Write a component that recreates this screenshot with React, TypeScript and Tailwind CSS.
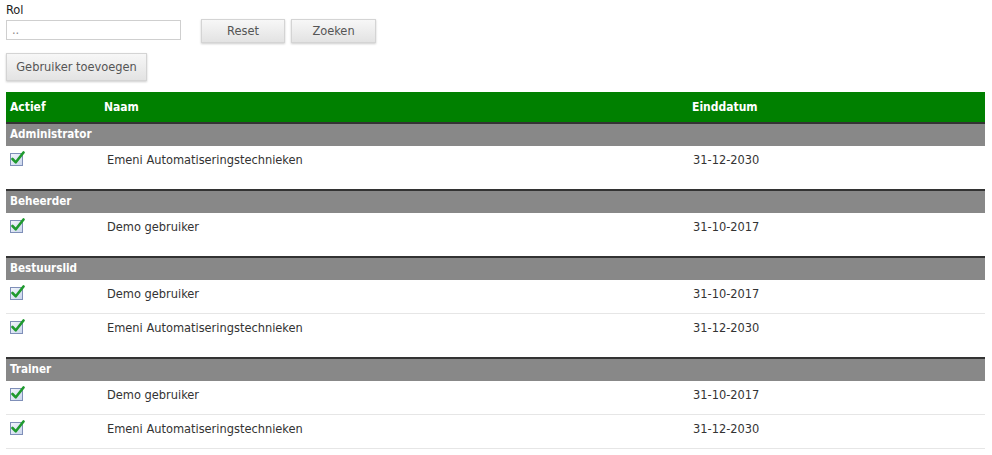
import React from "react";

type Row = { naam: string; datum: string };
type Group = { rol: string; rows: Row[] };

const groups: Group[] = [
  { rol: "Administrator", rows: [{ naam: "Emeni Automatiseringstechnieken", datum: "31-12-2030" }] },
  { rol: "Beheerder", rows: [{ naam: "Demo gebruiker", datum: "31-10-2017" }] },
  {
    rol: "Bestuurslid",
    rows: [
      { naam: "Demo gebruiker", datum: "31-10-2017" },
      { naam: "Emeni Automatiseringstechnieken", datum: "31-12-2030" },
    ],
  },
  {
    rol: "Trainer",
    rows: [
      { naam: "Demo gebruiker", datum: "31-10-2017" },
      { naam: "Emeni Automatiseringstechnieken", datum: "31-12-2030" },
    ],
  },
];

function CheckIcon() {
  return (
    <svg width="15" height="15" viewBox="0 0 15 15" aria-hidden>
      <defs>
        <linearGradient id="box" x1="0" y1="0" x2="1" y2="1">
          <stop offset="0" stopColor="#f4f7fc" />
          <stop offset="1" stopColor="#c9d5ec" />
        </linearGradient>
      </defs>
      <rect x="0.5" y="2.5" width="12" height="12" fill="url(#box)" stroke="#7f8fb8" />
      <path d="M2.5 8 L5.8 11.3 L13.5 1.5" fill="none" stroke="#1f9a2e" strokeWidth="2.6" strokeLinecap="round" strokeLinejoin="round" />
    </svg>
  );
}

const btn =
  "border border-[#d4d4d4] bg-gradient-to-b from-[#f7f7f7] to-[#e3e3e3] text-[#555] shadow-[0_1px_2px_rgba(0,0,0,0.2)]";

export default function App() {
  return (
    <div className="min-h-[455px] bg-white px-[6px] text-[12.7px] text-[#333] font-['DejaVu_Sans_Condensed','DejaVu_Sans',sans-serif]">
      <div className="pt-[2px] leading-[16px] text-[#222]">Rol</div>
      <div className="flex items-start">
        <div className="mt-[2px] h-[20px] w-[175px] border border-[#cfcfcf] px-[5px] leading-[18px] text-[#888]">..</div>
        <button className={`${btn} mt-[1px] ml-[20px] h-[24px] w-[84px]`}>Reset</button>
        <button className={`${btn} mt-[1px] ml-[6px] h-[24px] w-[85px]`}>Zoeken</button>
      </div>
      <button className={`${btn} mt-[10px] h-[28px] w-[141px]`}>Gebruiker toevoegen</button>

      <div className="mt-[11px] w-[979px]">
        <div className="flex h-[30px] items-center bg-[#008000] text-[12px] font-bold text-white">
          <div className="w-[94px] pl-[4px]">Actief</div>
          <div className="w-[588px] pl-[4px]">Naam</div>
          <div className="flex-1 pl-[4px]">Einddatum</div>
        </div>
        {groups.map((g, gi) => {
          const last = gi === groups.length - 1;
          return (
            <div key={g.rol} className={last ? "" : "pb-[9px]"}>
              <div className="flex h-[24px] items-center border-t-2 border-[#333] bg-[#888] pl-[4px] text-[11.6px] font-bold text-white">
                {g.rol}
              </div>
              {g.rows.map((r, ri) => {
                const border = last || ri < g.rows.length - 1;
                return (
                  <div
                    key={ri}
                    className={`flex h-[34px] items-start pt-[7px] leading-[14px] ${border ? "border-b border-[#e6e6e6]" : ""}`}
                  >
                    <div className="w-[94px] pl-[4px] -mt-[2px]">
                      <CheckIcon />
                    </div>
                    <div className="w-[588px] pl-[7px]">{r.naam}</div>
                    <div className="flex-1 pl-[5px]">{r.datum}</div>
                  </div>
                );
              })}
            </div>
          );
        })}
      </div>
    </div>
  );
}
